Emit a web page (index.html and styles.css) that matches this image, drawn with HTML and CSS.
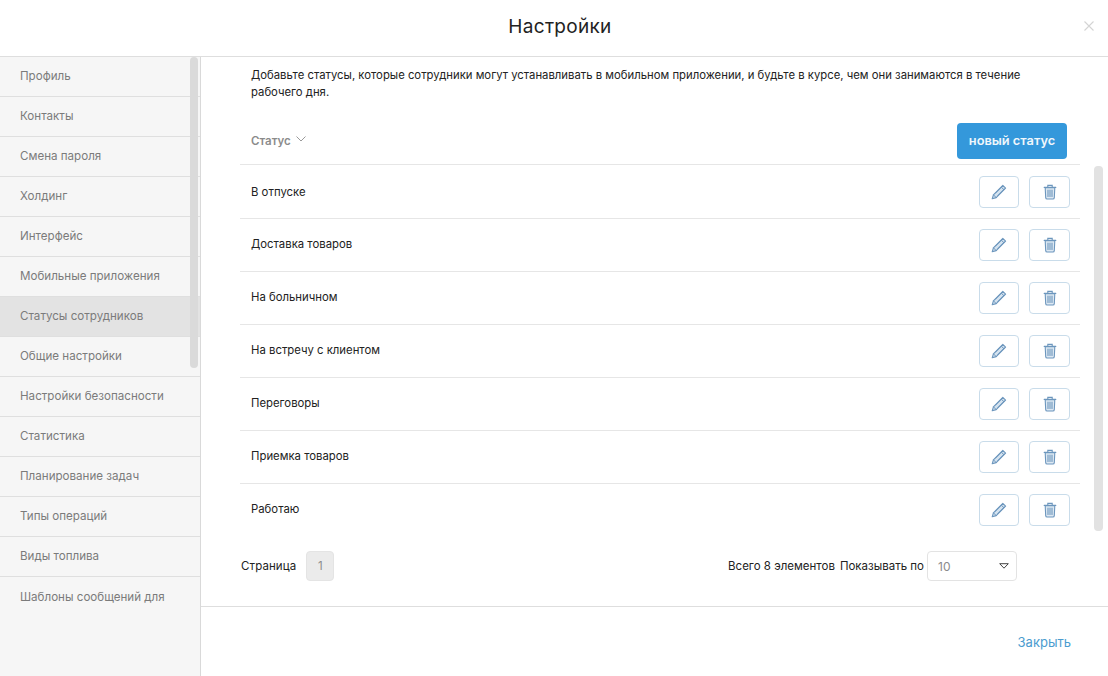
FILE: index.html
```html
<!DOCTYPE html>
<html lang="ru">
<head>
<meta charset="utf-8">
<title>Настройки</title>
<link rel="stylesheet" href="styles.css">
</head>
<body>
<div class="modal">
  <svg width="0" height="0" class="defs">
    <symbol id="pencil" viewBox="0 0 16 16">
      <path d="M11.8 1.4l2.8 2.8L5.2 13.6 1.2 14.8l1.2-4z" fill="#d3e2ef" stroke="currentColor" stroke-width="1.1" stroke-linejoin="round"/>
      <path d="M10.2 3l2.8 2.8 M2.4 10.8l2.8 2.8 M4.2 9.4l7.2-7.2 M6.6 11.8l7.2-7.2" fill="none" stroke="currentColor" stroke-width="1"/>
    </symbol>
    <symbol id="trash" viewBox="0 0 16 16">
      <path d="M3.2 3.6l.5 10q.1 1.4 1.4 1.4h5.8q1.3 0 1.4-1.4l.5-10z" fill="#dde8f2" stroke="currentColor" stroke-width="1.1"/>
      <path d="M2.2 3.4h11.6 M5.8 3.2V1.4h4.4v1.8 M6 6v6.4 M8 6v6.4 M10 6v6.4" fill="none" stroke="currentColor" stroke-width="1.1" stroke-linecap="round"/>
    </symbol>
  </svg>
  <header class="top">
    <h1 class="title">Настройки</h1>
    <svg class="close-x" width="10" height="10" viewBox="0 0 10 10"><path d="M.5.5l9 9M9.5.5l-9 9" stroke="#d4d4d4" stroke-width="1.1" fill="none"/></svg>
  </header>
  <div class="body">
    <nav class="side">
      <a class="side-item">Профиль</a>
      <a class="side-item">Контакты</a>
      <a class="side-item">Смена пароля</a>
      <a class="side-item">Холдинг</a>
      <a class="side-item">Интерфейс</a>
      <a class="side-item">Мобильные приложения</a>
      <a class="side-item active">Статусы сотрудников</a>
      <a class="side-item">Общие настройки</a>
      <a class="side-item">Настройки безопасности</a>
      <a class="side-item">Статистика</a>
      <a class="side-item">Планирование задач</a>
      <a class="side-item">Типы операций</a>
      <a class="side-item">Виды топлива</a>
      <a class="side-item last">Шаблоны сообщений для</a>
      <span class="side-thumb"></span>
    </nav>
    <main class="main">
      <div class="content">
        <p class="intro">Добавьте статусы, которые сотрудники могут устанавливать в мобильном приложении, и будьте в курсе, чем они занимаются в течение рабочего дня.</p>
        <div class="thead">
          <span class="th">Статус
            <svg class="sort" width="10" height="6" viewBox="0 0 10 6"><path d="M.5.5L5 5 9.5.5" fill="none" stroke="#9a9a9a" stroke-width="1"/></svg>
          </span>
          <button class="new-btn">новый статус</button>
        </div>
        <div class="rows">
          <div class="row first"><span>В отпуске</span><div class="acts"><button class="act"><svg width="16" height="16"><use href="#pencil"/></svg></button><button class="act"><svg width="16" height="16"><use href="#trash"/></svg></button></div></div>
          <div class="row"><span>Доставка товаров</span><div class="acts"><button class="act"><svg width="16" height="16"><use href="#pencil"/></svg></button><button class="act"><svg width="16" height="16"><use href="#trash"/></svg></button></div></div>
          <div class="row"><span>На больничном</span><div class="acts"><button class="act"><svg width="16" height="16"><use href="#pencil"/></svg></button><button class="act"><svg width="16" height="16"><use href="#trash"/></svg></button></div></div>
          <div class="row"><span>На встречу с клиентом</span><div class="acts"><button class="act"><svg width="16" height="16"><use href="#pencil"/></svg></button><button class="act"><svg width="16" height="16"><use href="#trash"/></svg></button></div></div>
          <div class="row"><span>Переговоры</span><div class="acts"><button class="act"><svg width="16" height="16"><use href="#pencil"/></svg></button><button class="act"><svg width="16" height="16"><use href="#trash"/></svg></button></div></div>
          <div class="row"><span>Приемка товаров</span><div class="acts"><button class="act"><svg width="16" height="16"><use href="#pencil"/></svg></button><button class="act"><svg width="16" height="16"><use href="#trash"/></svg></button></div></div>
          <div class="row end"><span>Работаю</span><div class="acts"><button class="act"><svg width="16" height="16"><use href="#pencil"/></svg></button><button class="act"><svg width="16" height="16"><use href="#trash"/></svg></button></div></div>
          <span class="rows-thumb"></span>
        </div>
        <div class="pager">
          <div class="pager-left"><span>Страница</span><span class="page-num">1</span></div>
          <div class="pager-right">
            <span class="total">Всего 8 элементов</span>
            <span>Показывать по</span>
            <div class="select"><span>10</span><svg width="10" height="6" viewBox="0 0 10 6"><path d="M.7.7h8.6L5 5.2z" fill="none" stroke="#444" stroke-width="1" stroke-linejoin="round"/></svg></div>
          </div>
        </div>
      </div>
      <footer class="foot"><a class="close-link">Закрыть</a></footer>
    </main>
  </div>
</div>
</body>
</html>
```
FILE: styles.css
```css
* { box-sizing: border-box; }
html, body { margin: 0; height: 100%; }
body { width: 1108px; height: 676px; overflow: hidden; background: #fff; font-family: "Inter", "Liberation Sans", sans-serif; font-size: 11.5px; color: #222; }
.defs { position: absolute; }
.modal { display: flex; flex-direction: column; height: 676px; }
.top { height: 57px; flex: none; display: flex; align-items: center; justify-content: center; position: relative; border-bottom: 1px solid #dedede; padding: 0 0 3px 12px; }
.title { margin: 0; font-size: 19px; font-weight: 400; color: #222; letter-spacing: .3px; }
.close-x { position: absolute; left: 1084px; top: 21px; }
.body { flex: 1; display: flex; min-height: 0; }
.side { width: 201px; flex: none; background: #f6f6f6; border-right: 1px solid #d9d9d9; position: relative; overflow: hidden; font-size: 11.6px; }
.side-item { display: flex; align-items: center; height: 40px; padding-left: 20px; padding-bottom: 1px; color: #7b7b7b; border-bottom: 1px solid #dfdfdf; }
.side-item.active { background: #e3e3e3; }
.side-item.last { border-bottom: 0; }
.side-thumb { position: absolute; left: 190px; top: 0; width: 8px; height: 311px; background: #dadada; border-radius: 4px; }
.main { flex: 1; min-width: 0; display: flex; flex-direction: column; }
.content { height: 549px; flex: none; padding: 10px 28px 0 39px; position: relative; }
.intro { margin: 0; padding-left: 11px; line-height: 17px; color: #222; width: 810px; font-size: 11.32px; }
.thead { display: flex; justify-content: space-between; align-items: center; height: 61px; margin-top: 3px; padding: 13px 13px 0 11px; border-bottom: 1px solid #e6e6e6; }
.th { color: #8b8b8b; font-weight: 600; display: flex; align-items: center; gap: 5px; }
.sort { position: relative; top: -2px; }
.new-btn { width: 110px; height: 36px; border: 0; border-radius: 4px; background: #3498db; color: #f0f7fc; font: 600 12.8px "Inter", "Liberation Sans", sans-serif; padding: 0; }
.row { display: flex; justify-content: space-between; align-items: center; height: 53px; padding: 0 10px 0 11px; border-bottom: 1px solid #e6e6e6; font-size: 11.35px; }
.row.first { height: 54px; }
.row.end { height: 52px; border-bottom: 0; }
.row > span { color: #222; margin-bottom: 2px; }
.row.first > span { margin-bottom: 0; }
.acts { display: flex; gap: 10px; }
.act { width: 40px; height: 32px; padding: 0; border: 1px solid #c9dcea; border-radius: 4px; background: #fff; color: #6c96bd; display: flex; align-items: center; justify-content: center; }
.act + .act { width: 41px; }
.rows-thumb { position: absolute; left: 893px; top: 109px; width: 9px; height: 365px; background: #e2e2e2; border-radius: 4px; }
.pager { display: flex; justify-content: space-between; align-items: center; height: 30px; margin-top: 15px; padding: 0 63px 0 1px; }
.pager-left { display: flex; align-items: center; gap: 10px; }
.pager-left span:first-child { letter-spacing: .1px; }
.page-num { width: 28px; height: 30px; background: #ebebeb; border: 1px solid #e4e4e4; border-radius: 4px; display: flex; align-items: center; justify-content: center; color: #8b8b8b; }
.pager-right { display: flex; align-items: center; gap: 5px; }
.select { width: 90px; height: 30px; margin-left: -2px; border: 1px solid #e3e3e3; border-radius: 4px; display: flex; align-items: center; justify-content: space-between; padding: 0 7px 0 10px; color: #8b8b8b; font-size: 12px; }
.foot { flex: 1; border-top: 1px solid #dedede; display: flex; align-items: center; justify-content: flex-end; padding: 0 37px 0 0; }
.close-link { color: #4c9ccf; font-size: 13px; }
```
